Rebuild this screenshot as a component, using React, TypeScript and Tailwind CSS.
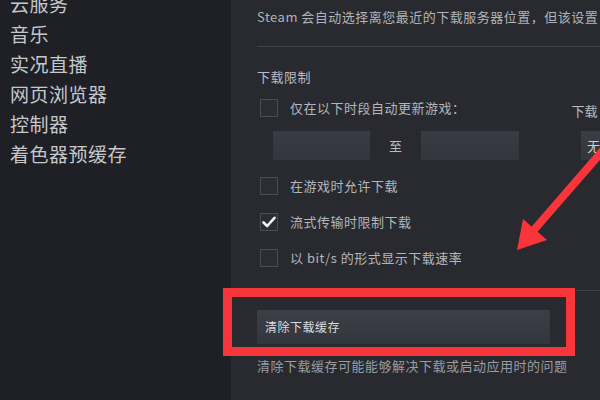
import React from "react";

const font = { fontFamily: '"Noto Sans CJK SC", "Noto Sans", sans-serif' };

function Check({ checked = false }: { checked?: boolean }) {
  return (
    <div className="w-[18px] h-[18px] border border-[#4a4d54] bg-[#2a2d33] flex items-center justify-center shrink-0">
      {checked && (
        <svg width="14" height="12" viewBox="0 0 14 12">
          <path d="M1.5 6.5 L5.2 10 L12.5 1.8" fill="none" stroke="#f2f3f4" strokeWidth="2.6" strokeLinecap="round" strokeLinejoin="round" />
        </svg>
      )}
    </div>
  );
}

function Row({ label, checked = false, className = "" }: { label: string; checked?: boolean; className?: string }) {
  return (
    <div className={`flex items-center gap-[12px] ml-[3px] h-[18px] ${className}`}>
      <Check checked={checked} />
      <span className="text-[13px] tracking-[0.5px] leading-[16px] text-[#b3b6bc] whitespace-nowrap">{label}</span>
    </div>
  );
}

export default function App() {
  const side = ["云服务", "音乐", "实况直播", "网页浏览器", "控制器", "着色器预缓存"];
  return (
    <div className="relative w-[600px] h-[400px] overflow-hidden flex" style={font}>
      <div className="w-[231px] h-full bg-[#1e2025] shrink-0">
        <div className="mt-[-11px] pl-[10px]">
          {side.map((s) => (
            <div key={s} className="h-[30px] leading-[30px] text-[19px] tracking-[0.5px] text-[#c6c8cc] whitespace-nowrap">
              {s}
            </div>
          ))}
        </div>
      </div>
      <div className="flex-1 h-full bg-[#282a30] pl-[26px] flex flex-col overflow-hidden">
        <div className="mt-[9px] h-[16px] leading-[16px] text-[13px] tracking-[0.5px] text-[#b0b4ba] whitespace-nowrap">
          Steam 会自动选择离您最近的下载服务器位置，但该设置
        </div>
        <div className="mt-[21px] h-px bg-[#3e4148] w-[400px] shrink-0" />
        <div className="mt-[22px] h-[16px] leading-[16px] text-[13px] tracking-[0.5px] text-[#b9bcc1]">下载限制</div>
        <div className="mt-[14px] flex items-start h-[18px]">
          <Row label="仅在以下时段自动更新游戏：" />
          <span className="ml-[106px] mt-[4px] text-[13px] leading-[16px] text-[#b9bcc1] whitespace-nowrap">下载</span>
        </div>
        <div className="mt-[14px] flex items-center h-[29px]">
          <div className="ml-[16px] w-[97px] h-[29px] bg-gradient-to-b from-[#393c44] to-[#33363d] shrink-0" />
          <span className="w-[51px] text-center text-[13px] text-[#b9bcc1] shrink-0">至</span>
          <div className="w-[98px] h-[29px] bg-gradient-to-b from-[#393c44] to-[#33363d] shrink-0" />
          <div className="ml-[62px] w-[40px] h-[29px] bg-gradient-to-b from-[#3a3d45] to-[#33363d] shrink-0 flex items-center pl-[6px] text-[13px] text-[#d0d2d6]">
            无
          </div>
        </div>
        <Row className="mt-[17px]" label="在游戏时允许下载" />
        <Row className="mt-[18px]" label="流式传输时限制下载" checked />
        <Row className="mt-[18px]" label="以 bit/s 的形式显示下载速率" />
        <div className="mt-[23px] h-px bg-[#3e4148] w-[400px] shrink-0" />
        <div className="mt-[19px] w-[293px] h-[34px] bg-gradient-to-b from-[#3c3f47] to-[#33363d] flex items-center pl-[8px] text-[12px] tracking-[0.5px] text-[#d8dbde] shrink-0">
          清除下载缓存
        </div>
        <div className="mt-[14px] h-[16px] leading-[16px] text-[13px] tracking-[0.5px] text-[#989ca3] whitespace-nowrap">
          清除下载缓存可能能够解决下载或启动应用时的问题
        </div>
      </div>
      <div className="absolute left-[223px] top-[288px] w-[352px] h-[68px] border-[9px] border-[#f7353b] pointer-events-none" />
      <svg className="absolute left-0 top-0 pointer-events-none" width="600" height="400">
        <line x1="533" y1="231" x2="612" y2="140" stroke="#f7353b" strokeWidth="8" />
        <polygon points="517,250 523,219 547,240" fill="#f7353b" />
      </svg>
    </div>
  );
}
